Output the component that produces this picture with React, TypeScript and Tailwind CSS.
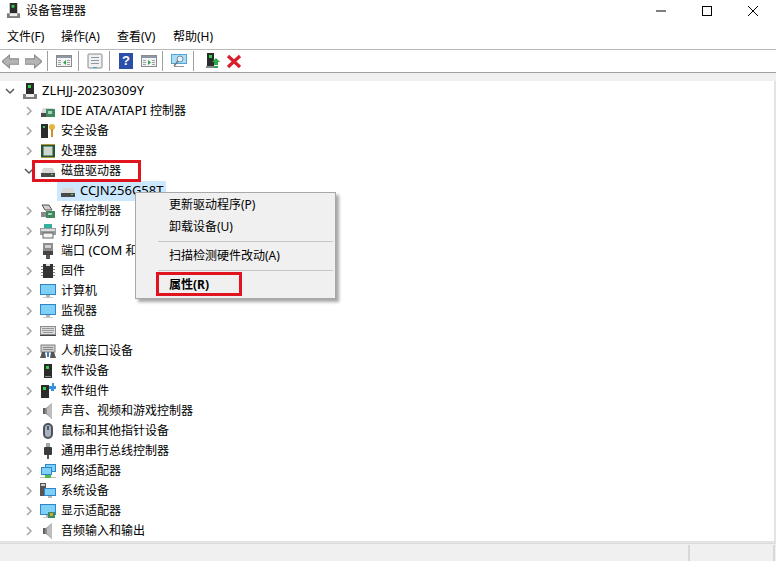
import React, { FC, ReactNode } from 'react'

const Svg: FC<{ children: ReactNode; className?: string }> = ({ children, className = 'w-4 h-4' }) => (
  <svg viewBox="0 0 16 16" className={`${className} shrink-0`}>
    {children}
  </svg>
)

const Tower = () => (
  <>
    <rect x="4" y="0" width="8" height="11" fill="#2b2b2b" />
    <rect x="6" y="2" width="3" height="3" fill="#35d04a" />
    <path d="M1 11h14v5H1z" fill="#7d7d7d" />
    <path d="M4 11h8v3H4z" fill="#eeeeee" />
  </>
)

const Disk = () => (
  <>
    <path d="M3 5h10l2 5H1z" fill="#d8d8d8" />
    <rect x="1" y="10" width="14" height="4" fill="#4a4a4a" />
    <rect x="11" y="11" width="2" height="1" fill="#4fe05c" />
  </>
)

const Monitor = () => (
  <>
    <rect x="0" y="1" width="16" height="11" fill="#2f86c8" />
    <rect x="1" y="2" width="14" height="9" fill="#7fd0f7" />
    <rect x="6" y="12" width="4" height="2" fill="#a9b4bc" />
    <rect x="3" y="14" width="10" height="1" fill="#c4ccd2" />
  </>
)

const Speaker = () => (
  <>
    <path d="M3 5h3l6-5v16l-6-5H3z" fill="#8c8c8c" />
    <path d="M7 5l5-5v16l-5-5z" fill="#bdbdbd" />
    <path d="M3 5h2v6H3z" fill="#606060" />
  </>
)

const Device = () => (
  <>
    <rect x="4" y="1" width="8" height="14" fill="#2b2b2b" />
    <rect x="6" y="3" width="3" height="3" fill="#35d04a" />
    <rect x="5" y="13" width="6" height="1" fill="#8a8a8a" />
  </>
)

const Board = () => <path d="M8 9h7v6H8z" fill="#3d8a5f" />

const treeIcons: Record<string, ReactNode> = {
  ide: (
    <>
      <Disk />
      <rect x="6" y="6" width="9" height="8" fill="#3d8a5f" />
      <rect x="8" y="8" width="4" height="3" fill="#a7d3b6" />
    </>
  ),
  security: (
    <>
      <rect x="1" y="1" width="7" height="14" fill="#2b2b2b" />
      <rect x="3" y="3" width="2" height="2" fill="#35d04a" />
      <circle cx="12" cy="4" r="3" fill="#e8b53c" />
      <rect x="11" y="6" width="2" height="8" fill="#c99425" />
    </>
  ),
  cpu: (
    <>
      <rect x="1" y="1" width="14" height="14" fill="#24553a" />
      <rect x="3.5" y="3.5" width="9" height="9" fill="#cfd8cf" />
      <path d="M1 1h14v1H1zM1 14h14v1H1z" fill="#b39a3a" />
    </>
  ),
  disk: <Disk />,
  storage: (
    <>
      <path d="M2 2h7l3 5H5z" fill="#cfcfcf" stroke="#555" strokeWidth="1" />
      <path d="M1 9h5v5H1z" fill="#8a8a8a" />
      <rect x="6" y="8" width="9" height="7" fill="#3d8a5f" />
      <rect x="8" y="10" width="4" height="2" fill="#a7d3b6" />
    </>
  ),
  printer: (
    <>
      <rect x="4" y="1" width="8" height="4" fill="#35b0a0" />
      <rect x="0" y="5" width="16" height="7" fill="#9b9b9b" />
      <rect x="1" y="6" width="14" height="2" fill="#dedede" />
      <rect x="3" y="10" width="10" height="5" fill="#f4f4f4" stroke="#666" strokeWidth="1" />
    </>
  ),
  port: (
    <>
      <rect x="3" y="0" width="10" height="8" fill="#8c8c8c" />
      <rect x="5" y="2" width="6" height="3" fill="#d0d0d0" />
      <rect x="3" y="8" width="10" height="4" fill="#444" />
      <rect x="6" y="12" width="4" height="4" fill="#555" />
    </>
  ),
  firmware: (
    <>
      <rect x="3" y="1" width="10" height="14" fill="#333" />
      <path d="M1 3h2v1H1zM1 6h2v1H1zM1 9h2v1H1zM1 12h2v1H1zM13 3h2v1h-2zM13 6h2v1h-2zM13 9h2v1h-2zM13 12h2v1h-2z" fill="#888" />
      <rect x="6" y="1" width="4" height="2" fill="#ddd" />
    </>
  ),
  computer: <Monitor />,
  keyboard: (
    <>
      <rect x="0.5" y="3.5" width="15" height="8" fill="#dcdcdc" stroke="#8e8e8e" strokeWidth="1" />
      <path d="M2 5h12v1H2zM2 7h12v1H2zM3 9h10v1H3z" fill="#9a9a9a" />
      <rect x="0" y="12" width="16" height="1" fill="#444" />
    </>
  ),
  hid: (
    <>
      <rect x="1" y="2" width="14" height="7" fill="#cfcfcf" stroke="#808080" strokeWidth="1" />
      <path d="M3 4h10v1H3zM3 6h10v1H3z" fill="#8a8a8a" />
      <path d="M0 15l2-6h3l1 6zM10 15l1-6h3l2 6z" fill="#555" />
      <rect x="7" y="9" width="2" height="5" fill="#3f7fc0" />
    </>
  ),
  software: <Device />,
  component: (
    <>
      <rect x="1" y="2" width="8" height="13" fill="#2b2b2b" />
      <rect x="3" y="4" width="3" height="3" fill="#35d04a" />
      <path d="M9 3h3V0h2v3h2v3h-2v2h-3V6H9z" fill="#3a92dc" />
    </>
  ),
  sound: <Speaker />,
  mouse: (
    <>
      <rect x="3" y="0" width="10" height="16" rx="5" fill="#4b545e" />
      <rect x="5" y="2" width="6" height="12" rx="3" fill="#aab3bd" />
      <rect x="7" y="3" width="2" height="4" fill="#4f5963" />
    </>
  ),
  usb: (
    <>
      <rect x="6" y="0" width="4" height="4" fill="#a5a5a5" />
      <rect x="4" y="4" width="8" height="8" rx="1" fill="#3b3b3b" />
      <rect x="7" y="12" width="2" height="4" fill="#555" />
    </>
  ),
  network: (
    <>
      <rect x="5" y="1" width="11" height="8" fill="#2f86c8" />
      <rect x="6" y="2" width="9" height="6" fill="#7fd0f7" />
      <rect x="1" y="4" width="11" height="8" fill="#2f86c8" />
      <rect x="2" y="5" width="9" height="6" fill="#7fd0f7" />
      <rect x="0" y="14" width="16" height="1" fill="#bfc7bf" />
      <rect x="5" y="12" width="6" height="3" fill="#4fb848" />
    </>
  ),
  system: (
    <>
      <rect x="0" y="0" width="6" height="13" fill="#555" />
      <rect x="1" y="1" width="4" height="2" fill="#ccc" />
      <rect x="4" y="5" width="12" height="8" fill="#2f86c8" />
      <rect x="5" y="6" width="10" height="6" fill="#7fd0f7" />
      <rect x="8" y="13" width="4" height="2" fill="#b0bac2" />
    </>
  ),
  display: (
    <>
      <Monitor />
      <Board />
      <rect x="10" y="10" width="3" height="3" fill="#c9a63c" />
    </>
  ),
}

const devices: { label: string; icon: string }[] = [
  { label: 'IDE ATA/ATAPI 控制器', icon: 'ide' },
  { label: '安全设备', icon: 'security' },
  { label: '处理器', icon: 'cpu' },
  { label: '磁盘驱动器', icon: 'disk' },
  { label: 'CCJN256G58T', icon: 'disk' },
  { label: '存储控制器', icon: 'storage' },
  { label: '打印队列', icon: 'printer' },
  { label: '端口 (COM 和 LPT)', icon: 'port' },
  { label: '固件', icon: 'firmware' },
  { label: '计算机', icon: 'computer' },
  { label: '监视器', icon: 'computer' },
  { label: '键盘', icon: 'keyboard' },
  { label: '人机接口设备', icon: 'hid' },
  { label: '软件设备', icon: 'software' },
  { label: '软件组件', icon: 'component' },
  { label: '声音、视频和游戏控制器', icon: 'sound' },
  { label: '鼠标和其他指针设备', icon: 'mouse' },
  { label: '通用串行总线控制器', icon: 'usb' },
  { label: '网络适配器', icon: 'network' },
  { label: '系统设备', icon: 'system' },
  { label: '显示适配器', icon: 'display' },
  { label: '音频输入和输出', icon: 'sound' },
]

// latin runs are a bit wider in the original font, so they get a larger size
const Label: FC<{ text: string }> = ({ text }) => (
  <span className="whitespace-nowrap">
    {text.split(/([A-Za-z0-9/\- ()]+)/).map((part, i) =>
      i % 2 === 1 ? (
        <span key={i} className="text-[13px]">
          {part}
        </span>
      ) : (
        part
      ),
    )}
  </span>
)

const Chevron: FC<{ open?: boolean }> = ({ open }) => (
  <svg viewBox="0 0 10 10" className="w-[10px] h-[10px] shrink-0">
    <polyline
      points={open ? '1,3 5,7 9,3' : '3,1 7,5 3,9'}
      fill="none"
      stroke={open ? '#595959' : '#a6a6a6'}
      strokeWidth="1.5"
    />
  </svg>
)

const Sep = () => <div className="w-px h-[20px] bg-[#a0a0a0] shrink-0" />

const Window = ({ arrow }: { arrow: string }) => (
  <Svg>
    <rect x="0.5" y="2.5" width="15" height="11" fill="#f4f4f4" stroke="#8a8a8a" />
    <rect x="1" y="3" width="14" height="2" fill="#8d99a5" />
    <path d="M2 7h3v1H2zM2 9h3v1H2zM2 11h3v1H2zM11 7h3v1h-3zM11 9h3v1h-3zM11 11h3v1h-3z" fill="#9aa3ac" />
    <path d={arrow} fill="#2fa84a" />
  </Svg>
)

const Toolbar = () => (
  <div className="h-[22px] flex items-center bg-white shrink-0">
    <svg viewBox="0 0 16 14" className="w-[17px] h-[15px] ml-[2px] shrink-0">
      <path d="M0 7l7-6v3.5h9v5H7V13z" fill="#b5b5b5" stroke="#8c8c8c" />
    </svg>
    <svg viewBox="0 0 16 14" className="w-[17px] h-[15px] ml-[6px] shrink-0">
      <path d="M16 7L9 1v3.5H0v5h9V13z" fill="#b5b5b5" stroke="#8c8c8c" />
    </svg>
    <div className="ml-[5px]"><Sep /></div>
    <div className="ml-[8px]"><Window arrow="M10 7v5L7 9.5z" /></div>
    <div className="ml-[6px]"><Sep /></div>
    <div className="ml-[8px]">
      <Svg>
        <rect x="1" y="1" width="14" height="14" rx="1" fill="#f0f0f0" stroke="#8a8a8a" />
        <path d="M4 4h8v1H4zM4 7h8v1H4zM4 10h8v1H4z" fill="#8d99a5" />
        <rect x="6" y="14" width="4" height="1" fill="#35a7e0" />
      </Svg>
    </div>
    <div className="ml-[6px]"><Sep /></div>
    <div className="ml-[9px] w-[14px] h-[16px] bg-[#2b4fa8] text-white text-[13px] leading-[16px] font-bold text-center font-['Liberation_Sans',sans-serif]">
      ?
    </div>
    <div className="ml-[8px]"><Window arrow="M7 7v5l3-2.5z" /></div>
    <div className="ml-[5px]"><Sep /></div>
    <div className="ml-[8px]">
      <Svg>
        <rect x="0" y="1" width="16" height="10" fill="#4ea6dc" />
        <rect x="1" y="2" width="14" height="8" fill="#a9dcf5" />
        <rect x="3" y="13" width="10" height="1" fill="#8a99a5" />
        <circle cx="9" cy="6" r="3" fill="#dff2fb" stroke="#7a8a95" />
        <path d="M7 8l-4 5" stroke="#6b7780" strokeWidth="1.5" />
      </Svg>
    </div>
    <div className="ml-[6px]"><Sep /></div>
    <div className="ml-[11px]">
      <Svg>
        <rect x="2" y="0" width="7" height="13" fill="#2b2b2b" />
        <rect x="4" y="2" width="3" height="3" fill="#35d04a" />
        <rect x="1" y="13" width="9" height="2" fill="#8a8a8a" />
        <path d="M11 5l4 4h-2v3h-4V9H7z" fill="#2fa84a" />
        <rect x="9" y="13" width="4" height="2" fill="#2fa84a" />
      </Svg>
    </div>
    <div className="ml-[5px]">
      <Svg>
        <path d="M2 3l12 11M14 3L2 14" stroke="#d8202c" strokeWidth="3.2" />
      </Svg>
    </div>
  </div>
)

const TreeRow: FC<{ label: string; icon: string }> = ({ label, icon }) => {
  const isOpen = label === '磁盘驱动器'
  const isChild = label === 'CCJN256G58T'

  if (isChild) {
    return (
      <div className="h-[20px] flex items-center pl-[57px]">
        <div className="h-[20px] w-[109px] bg-[#cce8ff] flex items-center pl-[3px] gap-[4px]">
          <Svg>{treeIcons[icon]}</Svg>
          <Label text={label} />
        </div>
      </div>
    )
  }

  return (
    <div className="h-[20px] flex items-center">
      <div className="ml-[24px] w-[16px]">
        <Chevron open={isOpen} />
      </div>
      <Svg>{treeIcons[icon]}</Svg>
      <span className="ml-[5px]">
        <Label text={label} />
      </span>
    </div>
  )
}

const MenuItem: FC<{ children: ReactNode; bold?: boolean }> = ({ children, bold }) => (
  <div className={`h-[22px] pl-[33px] flex items-center ${bold ? 'font-bold' : ''}`}>{children}</div>
)

export default function App() {
  return (
    <div className="w-[776px] h-[561px] relative overflow-hidden bg-white text-black text-[12px] font-['Noto_Sans','Noto_Sans_CJK_SC',sans-serif] flex flex-col">
      {/* title bar */}
      <div className="h-[21px] flex items-center shrink-0">
        <div className="ml-[6px]">
          <Svg className="w-[15px] h-[15px]">
            <Tower />
          </Svg>
        </div>
        <span className="ml-[5px]">设备管理器</span>
        <div className="ml-auto flex">
          <div className="w-[46px] flex justify-center">
            <svg viewBox="0 0 10 10" className="w-[10px] h-[10px]">
              <path d="M0 5h10" stroke="#000" />
            </svg>
          </div>
          <div className="w-[46px] flex justify-center">
            <svg viewBox="0 0 10 10" className="w-[10px] h-[10px]">
              <rect x="0.5" y="0.5" width="9" height="9" fill="none" stroke="#000" />
            </svg>
          </div>
          <div className="w-[46px] flex justify-center">
            <svg viewBox="0 0 10 10" className="w-[10px] h-[10px]">
              <path d="M0 0l10 10M10 0L0 10" stroke="#000" />
            </svg>
          </div>
        </div>
      </div>

      {/* menu bar */}
      <div className="h-[29px] pt-[3px] flex items-center shrink-0 border-b border-[#b9b9b9]">
        <span className="ml-[7px] w-[54px]">文件(F)</span>
        <span className="w-[56px]">操作(A)</span>
        <span className="w-[56px]">查看(V)</span>
        <span>帮助(H)</span>
      </div>

      <Toolbar />

      <div className="h-[9px] shrink-0 bg-[#f0f0f0] border-t border-[#a0a0a0]" />

      {/* device tree */}
      <div className="flex-1 min-h-0 border-r-2 border-b-2 border-[#e3e3e3] overflow-hidden">
        <div className="h-[20px] flex items-center">
          <div className="ml-[5px] w-[17px]">
            <Chevron open />
          </div>
          <Svg>
            <Tower />
          </Svg>
          <span className="ml-[4px]">
            <Label text="ZLHJJ-20230309Y" />
          </span>
        </div>
        {devices.map((d) => (
          <TreeRow key={d.label} label={d.label} icon={d.icon} />
        ))}
      </div>

      {/* status bar */}
      <div className="h-[18px] shrink-0 bg-[#f0f0f0] border-t border-[#dcdcdc] pt-[1px] flex justify-end">
        <div className="w-[87px] mr-[1px] border-x-2 border-[#d8d8d8]" />
      </div>

      {/* context menu */}
      <div className="absolute left-[135px] top-[192px] w-[201px] h-[107px] bg-[#f0f0f0] border border-[#a8a8a8] shadow-[3px_3px_3px_rgba(0,0,0,0.35)] py-[1px]">
        <MenuItem>更新驱动程序(P)</MenuItem>
        <MenuItem>卸载设备(U)</MenuItem>
        <div className="ml-[22px] mr-[2px] my-[3px] h-px bg-[#c6c6c6]" />
        <MenuItem>扫描检测硬件改动(A)</MenuItem>
        <div className="ml-[22px] mr-[2px] my-[3px] h-px bg-[#c6c6c6]" />
        <MenuItem bold>属性(R)</MenuItem>
      </div>

      {/* annotation boxes */}
      <div className="absolute left-[32px] top-[160px] w-[109px] h-[22px] border-[3px] border-[#e0141e]" />
      <div className="absolute left-[156px] top-[272px] w-[86px] h-[24px] border-[3px] border-[#e0141e]" />
    </div>
  )
}
